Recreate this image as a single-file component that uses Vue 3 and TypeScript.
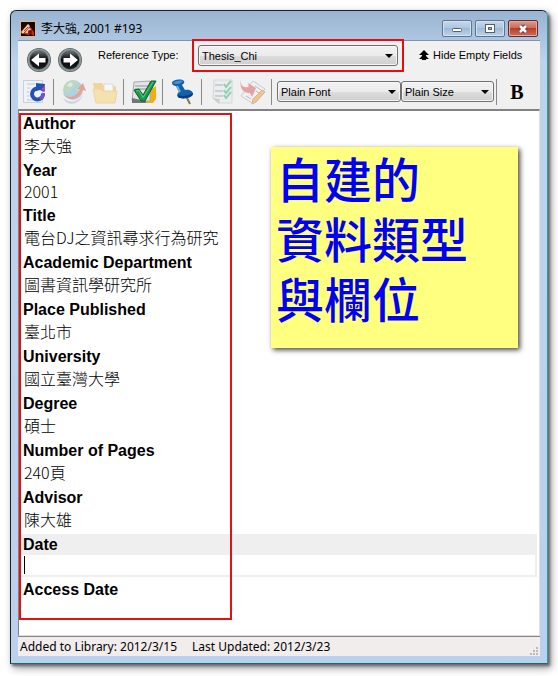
<script setup lang="ts">
import { ref } from 'vue'

interface Field {
  id: string
  label: string
  value: string
  tall: boolean
}

const fields = ref<Field[]>([
  { id: 'author', label: 'Author', value: '李大強', tall: true },
  { id: 'year', label: 'Year', value: '2001', tall: false },
  { id: 'title', label: 'Title', value: '電台DJ之資訊尋求行為研究', tall: true },
  { id: 'department', label: 'Academic Department', value: '圖書資訊學研究所', tall: true },
  { id: 'place', label: 'Place Published', value: '臺北市', tall: true },
  { id: 'university', label: 'University', value: '國立臺灣大學', tall: true },
  { id: 'degree', label: 'Degree', value: '碩士', tall: true },
  { id: 'pages', label: 'Number of Pages', value: '240頁', tall: true },
  { id: 'advisor', label: 'Advisor', value: '陳大雄', tall: true },
  { id: 'date', label: 'Date', value: '', tall: false },
  { id: 'access', label: 'Access Date', value: '', tall: false },
])

const active = ref('date')
const referenceType = ref('Thesis_Chi')
const fontName = ref('Plain Font')
const fontSize = ref('Plain Size')
</script>

<template>
  <main class="page">
    <section class="window">
      <header class="titlebar">
        <svg class="app-icon" viewBox="0 0 16 16">
          <rect width="16" height="16" fill="#e9b87c" />
          <rect x="1" y="1" width="14" height="14" fill="#160806" />
          <path d="M1 12 8 3l6 8v4l-3-2-3 1z" fill="#b7321d" />
          <path d="M1 11 8 3l2 2-7 8zM5 12l4-5 2 1-3 4z" fill="#f6c79b" />
          <path d="M4 10l4-4M3 13l3-3" stroke="#b7321d" />
          <circle cx="10" cy="11" r="2" fill="#7b0d10" />
        </svg>
        <h1>李大強, 2001 #193</h1>
        <div class="controls">
          <button type="button" class="ctl" aria-label="Minimize">
            <svg viewBox="0 0 14 12"><rect x="2.500" y="5.500" width="9" height="3" rx="1" fill="#fff" stroke="#555f70" /></svg>
          </button>
          <button type="button" class="ctl" aria-label="Maximize">
            <svg viewBox="0 0 14 12"><rect x="2.500" y="1.500" width="9" height="8" fill="#fff" stroke="#555f70" /><rect x="5.500" y="4.500" width="3" height="2" fill="#9fb9d6" stroke="#555f70" /></svg>
          </button>
          <button type="button" class="ctl close" aria-label="Close">
            <svg viewBox="0 0 14 12"><path d="M4 3l6 6M10 3l-6 6" stroke="#604048" stroke-width="4.600" /><path d="M4 3l6 6M10 3l-6 6" stroke="#fff" stroke-width="2.600" /></svg>
          </button>
        </div>
      </header>

      <div class="client">
        <div class="row-top">
          <button type="button" class="nav" aria-label="Previous reference">
            <svg viewBox="0 0 26 26">
              <defs>
                <linearGradient id="ball" x1="0" y1="0" x2="0" y2="1">
                  <stop offset="0" stop-color="#6b7173" />
                  <stop offset="0.500" stop-color="#050505" />
                  <stop offset="1" stop-color="#1b1d1e" />
                </linearGradient>
              </defs>
              <circle cx="13" cy="13" r="12" fill="#596468" />
              <circle cx="13" cy="13" r="10.500" fill="none" stroke="#8d999d" stroke-width="1.500" />
              <circle cx="13" cy="13" r="9" fill="url(#ball)" />
              <path d="M5 13l8-6.500V11h6.500v4.500H13v4z" fill="#fff" />
            </svg>
          </button>
          <button type="button" class="nav" aria-label="Next reference">
            <svg viewBox="0 0 26 26">
              <circle cx="13" cy="13" r="12" fill="#596468" />
              <circle cx="13" cy="13" r="10.500" fill="none" stroke="#8d999d" stroke-width="1.500" />
              <circle cx="13" cy="13" r="9" fill="url(#ball)" />
              <path d="M21 13l-8-6.500V11H6.500v4.500H13v4z" fill="#fff" />
            </svg>
          </button>
          <label class="type-label" for="ref-type">Reference Type:</label>
          <div class="marked">
            <div class="combo">
              <select id="ref-type" v-model="referenceType"><option>Thesis_Chi</option></select>
            </div>
          </div>
          <button type="button" class="hide-empty">
            <svg viewBox="0 0 10 10"><path d="M5 0l5 5H7v1l3 3H7v1H3V9H0l3-3V5H0z" fill="#000" /></svg>
            <span>Hide Empty Fields</span>
          </button>
        </div>

        <div class="row-tools">
          <button type="button" class="tool" aria-label="Revert">
            <svg viewBox="0 0 26 26">
              <path d="M1.500 1.500h19v22h-19z" fill="#eff3f8" stroke="#c6cfda" />
              <path d="M5 5h8M5 9h3M5 13h2M5 17h2M5 21h7" stroke="#b4c9e2" />
              <path d="M15.500 9.500a5.500 5.500 0 1 0 5.500 5" fill="none" stroke="#2452ae" stroke-width="4" />
              <path d="M14 4l9 1-1 8-4-2-4 1z" fill="#2452ae" />
              <path d="M19 10l4-3v6z" fill="#b145c8" />
              <path d="M21.200 14a5.500 5.500 0 0 1-3.500 5.500" fill="none" stroke="#7a50c4" stroke-width="3" />
            </svg>
          </button>
          <span class="sep"></span>
          <button type="button" class="tool faded" aria-label="Open link">
            <svg viewBox="0 0 26 26">
              <circle cx="12" cy="11" r="10" fill="#6fb5d8" />
              <path d="M5 5c3-4 10-4 13-1l-4 1-1 4-3 1-2 4-4-2-1-4zM14 10l5-3 2 5-4 3z" fill="#8fc48a" />
              <path d="M9 3l3 2-2 3-4-1z" fill="#fff" opacity="0.600" />
              <path d="M1 14c6 7 15 4 18-4h-3l6-6 3 8-3-1c-4 10-14 13-21 3z" fill="#dc5649" />
              <path d="M2 19c7 6 15 4 20-3-3 9-15 13-20 3z" fill="#aebccb" />
            </svg>
          </button>
          <button type="button" class="tool faded" aria-label="Open file">
            <svg viewBox="0 0 26 26">
              <path d="M1 4h9l2 3h12v15H4z" fill="#efbb4c" />
              <path d="M12 5h9v8h-9z" fill="#fff" stroke="#c8c8c8" />
              <path d="M1 10h7l3 2h14l-2 12H4z" fill="#fbd36f" stroke="#eab95d" />
            </svg>
          </button>
          <span class="sep"></span>
          <button type="button" class="tool" aria-label="Spell check">
            <svg viewBox="0 0 26 26">
              <path d="M15 9h7l3-2v13l-3 4h-7z" fill="#f3ae14" />
              <path d="M3 3l16-1v20H1z" fill="#e2e4e5" stroke="#a4a9ac" />
              <path d="M4 7h13M4 10h12" stroke="#8d9699" />
              <path d="M1 19l14 3v2H1z" fill="#6f7779" />
              <path d="M3 11l5-1 4 6 8-14h5L14 22h-4z" fill="#1c9a48" stroke="#086030" />
              <path d="M5 12l3-.500 4 7L22 3" fill="none" stroke="#62ca7c" />
            </svg>
          </button>
          <span class="sep"></span>
          <button type="button" class="tool" aria-label="Attach">
            <svg viewBox="0 0 26 26">
              <path d="M16 17l4 8" stroke="#8d7445" stroke-width="2" />
              <path d="M2 4c0-3 9-5 12-2 1 2-1 3-2 4l3 5c4-1 8 1 8 4 0 4-12 6-15 3-2-2 0-4 1-5L6 7C4 7 2 6 2 4z" fill="#1560a9" />
              <path d="M3 4c2-2 7-3 10-2-2 3-7 4-10 2z" fill="#3f93d6" />
              <path d="M7 7l3 6" stroke="#68b2ec" stroke-width="2" />
              <path d="M8 16c4 2 10 1 15-2 0 5-11 7-15 4z" fill="#073d80" />
            </svg>
          </button>
          <span class="sep"></span>
          <button type="button" class="tool faded" aria-label="Checklist">
            <svg viewBox="0 0 26 26">
              <path d="M5 1h18v23H10l-6-5z" fill="#e7eaec" stroke="#b9c2c4" />
              <path d="M6 6h8M6 12h8M6 17h8" stroke="#657b7e" />
              <path d="M15 5l2 3 5-6M15 11l2 3 5-6M15 16l2 3 5-6" fill="none" stroke="#39b475" stroke-width="2" />
              <path d="M3 19l8 1-1 5z" fill="#a7b0b3" />
            </svg>
          </button>
          <button type="button" class="tool faded" aria-label="Insert citation">
            <svg viewBox="0 0 26 26">
              <path d="M13 2l12 8-13 14-11-7z" fill="#f0f0f1" stroke="#a7a7ab" />
              <path d="M15 7l6 4M6 17l5 3M16 12l3 2" stroke="#888" />
              <path d="M1 1c-1 6 3 8 8 7l-1-4 8 5-4 9-2-4C3 15-1 8 1 1z" fill="#d95957" />
              <path d="M22 11l3 2-9 10-4 2 1-5z" fill="#ee993a" stroke="#b67735" />
            </svg>
          </button>
          <span class="sep last"></span>
          <div class="combo font">
            <select v-model="fontName" aria-label="Font"><option>Plain Font</option></select>
          </div>
          <div class="combo size">
            <select v-model="fontSize" aria-label="Size"><option>Plain Size</option></select>
          </div>
          <span class="sep bold-sep"></span>
          <button type="button" class="bold">B</button>
        </div>

        <div class="editor">
          <form class="fields" @submit.prevent>
            <div v-for="f in fields" :key="f.id" class="field" :class="{ active: f.id === active }">
              <label :for="f.id">{{ f.label }}</label>
              <input :id="f.id" v-model="f.value" type="text" :class="{ tall: f.tall }" autocomplete="off" @focus="active = f.id" />
            </div>
            <div class="outline"></div>
          </form>
          <aside class="note">自建的<br />資料類型<br />與欄位</aside>
        </div>

        <footer class="status">
          <span>Added to Library: 2012/3/15</span>
          <span>Last Updated: 2012/3/23</span>
          <svg class="grip" viewBox="0 0 9 9">
            <path d="M7 0h2v2H7zM7 3h2v2H7zM7 6h2v2H7zM4 3h2v2H4zM4 6h2v2H4zM1 6h2v2H1z" fill="#bdb9b9" />
          </svg>
        </footer>
      </div>
    </section>
  </main>
</template>

<style>
body {
  margin: 0;
  background: #fff;
}
</style>

<style scoped>
* {
  box-sizing: border-box;
}

.page {
  display: flex;
  min-height: 100vh;
  padding: 10px 10px 12px;
  font: 11px/16px "Liberation Sans", "Noto Sans CJK TC", sans-serif;
  color: #000;
}

.window {
  display: flex;
  flex: 1;
  flex-direction: column;
  min-width: 0;
  padding: 0 7px 7px;
  border: 1px solid #16242f;
  border-right-color: #2f98a5;
  border-bottom-color: #1f6672;
  border-radius: 6px 6px 0 0;
  background: linear-gradient(#99b4d1, #bcd3ec 50px, #b9d1ec);
  box-shadow: 2px 2px 3px #666, 3px 4px 9px #999;
}

button {
  padding: 0;
  border: 0;
  background: none;
  color: inherit;
  font: inherit;
}

svg {
  display: block;
}

.titlebar {
  display: flex;
  align-items: center;
  gap: 5px;
  height: 29px;
  padding: 6px 2px 0;
}

.app-icon {
  width: 16px;
  height: 16px;
}

h1 {
  flex: 1;
  margin: 0;
  font: 12px/18px "Noto Sans", "Noto Sans CJK TC", sans-serif;
}

.controls {
  display: flex;
  gap: 3px;
}

.ctl {
  display: grid;
  place-items: center;
  width: 30px;
  height: 17px;
  border: 1px solid #60748e;
  border-radius: 2px;
  background: linear-gradient(#c5d7eb, #adc5e0 50%, #9db9d8 50%, #bdd3ec);
  box-shadow: inset 0 0 0 1px #d3e1f0;
}

.ctl svg {
  width: 14px;
  height: 12px;
}

.close {
  border-color: #642b2c;
  background: linear-gradient(#dc9d8e, #cd6753 50%, #b73e2d 50%, #cc705b);
  box-shadow: inset 0 0 0 1px #e2aba0;
}

.client {
  display: flex;
  flex: 1;
  flex-direction: column;
  border-top: 1px solid #8193a8;
  background: #f0f0f0;
}

.row-top {
  display: flex;
  align-items: flex-start;
  height: 35px;
  padding-left: 8px;
}

.nav {
  width: 26px;
  height: 26px;
  margin: 6px 5px 0 0;
}

.type-label {
  width: 80px;
  margin: 6px 14px 0 10px;
  white-space: nowrap;
}

.marked {
  z-index: 1;
  flex: 0 1 212px;
  margin-top: -2px;
  padding: 4px;
  border: 2px solid #e80c10;
}

.combo {
  position: relative;
  height: 21px;
}

.combo::after {
  position: absolute;
  top: 9px;
  right: 5px;
  border: 4px solid transparent;
  border-top-color: #000;
  border-bottom: 0;
  content: "";
  pointer-events: none;
}

select {
  display: block;
  width: 100%;
  height: 100%;
  padding: 0 16px 0 3px;
  border: 1px solid #707070;
  border-radius: 3px;
  appearance: none;
  background: linear-gradient(#f2f2f2, #ebebeb 50%, #dddddd 50%, #cfcfcf);
  box-shadow: inset 0 0 0 1px #f6f6f6;
  color: #000;
  font: inherit;
}

.hide-empty {
  display: flex;
  align-items: center;
  gap: 4px;
  margin: 6px 0 0 15px;
  white-space: nowrap;
}

.hide-empty svg {
  width: 10px;
  height: 10px;
}

.row-tools {
  display: flex;
  align-items: center;
  height: 33px;
  padding: 0 0 2px 4px;
}

.tool {
  width: 26px;
  height: 26px;
  margin-right: 5px;
}

.tool svg {
  width: 26px;
  height: 26px;
}

.faded {
  opacity: 0.5;
}

.sep {
  width: 1px;
  height: 26px;
  margin-right: 7px;
  background: #8a8a8a;
}

.last {
  margin-right: 5px;
}

.font {
  flex: 0 1 124px;
}

.size {
  flex: 0 1 93px;
}

.bold-sep {
  margin: 0 12px 0 2px;
}

.bold {
  width: 16px;
  font: bold 20px/24px "Liberation Serif", serif;
}

.editor {
  position: relative;
  flex: 1;
  padding: 2px 2px 0 0;
  border: solid #828282;
  border-width: 2px 1px 1px;
  border-right-color: #e0e0e0;
  border-bottom-color: #e0e0e0;
  background: #fff;
}

.fields {
  position: relative;
}

.field label {
  display: block;
  height: 21px;
  padding-left: 4px;
  font-size: 16px;
  font-weight: bold;
  line-height: 21px;
}

.field input {
  display: block;
  width: 100%;
  height: 24px;
  padding: 0 5px 4px;
  border: 0;
  outline: 0;
  background: #fff;
  color: #000;
  font: 300 16px/20px "Noto Sans CJK TC", "Liberation Sans", sans-serif;
}

.field .tall {
  height: 26px;
}

.field:last-of-type input {
  height: 20px;
}

.field.active {
  margin-bottom: 2px;
  padding-bottom: 2px;
  border-right: 2px solid #efefef;
  background: #efefef;
}

.field.active input {
  height: 20px;
  background: linear-gradient(#000, #000) 5px 1px / 1px 18px no-repeat #fff;
}

.field:nth-last-child(2) input {
  height: 20px;
}

.outline {
  position: absolute;
  inset: 0 auto 0 0;
  width: 213px;
  border: 2px solid #dc1414;
  pointer-events: none;
}

.note {
  position: absolute;
  top: 36px;
  left: 252px;
  width: 247px;
  height: 201px;
  padding: 0 5px;
  background: #ffff80;
  box-shadow: 2px 2px 5px #444;
  color: #0000f4;
  font: 500 48px/60px "Noto Sans CJK TC", sans-serif;
  white-space: nowrap;
}

.status {
  display: flex;
  align-items: center;
  gap: 15px;
  height: 20px;
  padding: 0 2px;
  border-top: 1px solid #858585;
  background: #f1eded;
  font: 12px/18px "Noto Sans", sans-serif;
}

.grip {
  align-self: flex-end;
  width: 9px;
  height: 9px;
  margin-left: auto;
}
</style>
